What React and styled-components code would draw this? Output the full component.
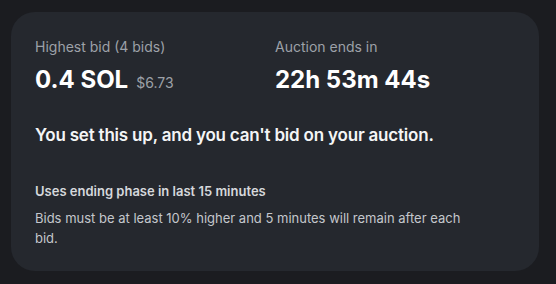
import styled, { createGlobalStyle } from "styled-components"

const Global = createGlobalStyle`
  body {
    margin: 0;
    background: #1b1c20;
    font-family: Inter, "Noto Sans", sans-serif;
    -webkit-font-smoothing: antialiased;
  }
`

const Page = styled.div`
  padding: 12px 17px 13px 11px;
`

const Card = styled.section`
  background: #25282e;
  border-radius: 24px;
  padding: 26px 24px 23px;
  color: #f4f5f6;
`

const Stats = styled.div`
  display: grid;
  grid-template-columns: 1fr 1fr;
`

const Stat = styled.div`
  display: flex;
  flex-direction: column;
  gap: 9px;
`

const Label = styled.div`
  font-size: 14px;
  line-height: 18px;
  color: #9da1a8;
`

const Value = styled.div`
  display: flex;
  align-items: baseline;
  gap: 8px;
  font-size: 24px;
  line-height: 30px;
  font-weight: 700;
  color: #ffffff;
`

const Fiat = styled.span`
  font-size: 14px;
  font-weight: 400;
  color: #9da1a8;
`

const Notice = styled.p`
  margin: 25px 0 0;
  font-size: 17px;
  line-height: 24px;
  font-weight: 600;
  letter-spacing: -0.2px;
  color: #f4f5f6;
`

const Rules = styled.div`
  margin-top: 35px;
  display: flex;
  flex-direction: column;
  gap: 8px;
`

const RuleTitle = styled.div`
  font-size: 13px;
  line-height: 18px;
  font-weight: 600;
  color: #d6d8dc;
`

const RuleText = styled.div`
  font-size: 13px;
  line-height: 20px;
  color: #c4c7cc;
  max-width: 440px;
`

export default function App() {
  return (
    <>
      <Global />
      <Page>
        <Card>
          <Stats>
            <Stat>
              <Label>Highest bid (4 bids)</Label>
              <Value>0.4 SOL <Fiat>$6.73</Fiat></Value>
            </Stat>
            <Stat>
              <Label>Auction ends in</Label>
              <Value>22h 53m 44s</Value>
            </Stat>
          </Stats>
          <Notice>You set this up, and you can't bid on your auction.</Notice>
          <Rules>
            <RuleTitle>Uses ending phase in last 15 minutes</RuleTitle>
            <RuleText>
              Bids must be at least 10% higher and 5 minutes will remain after each bid.
            </RuleText>
          </Rules>
        </Card>
      </Page>
    </>
  )
}
